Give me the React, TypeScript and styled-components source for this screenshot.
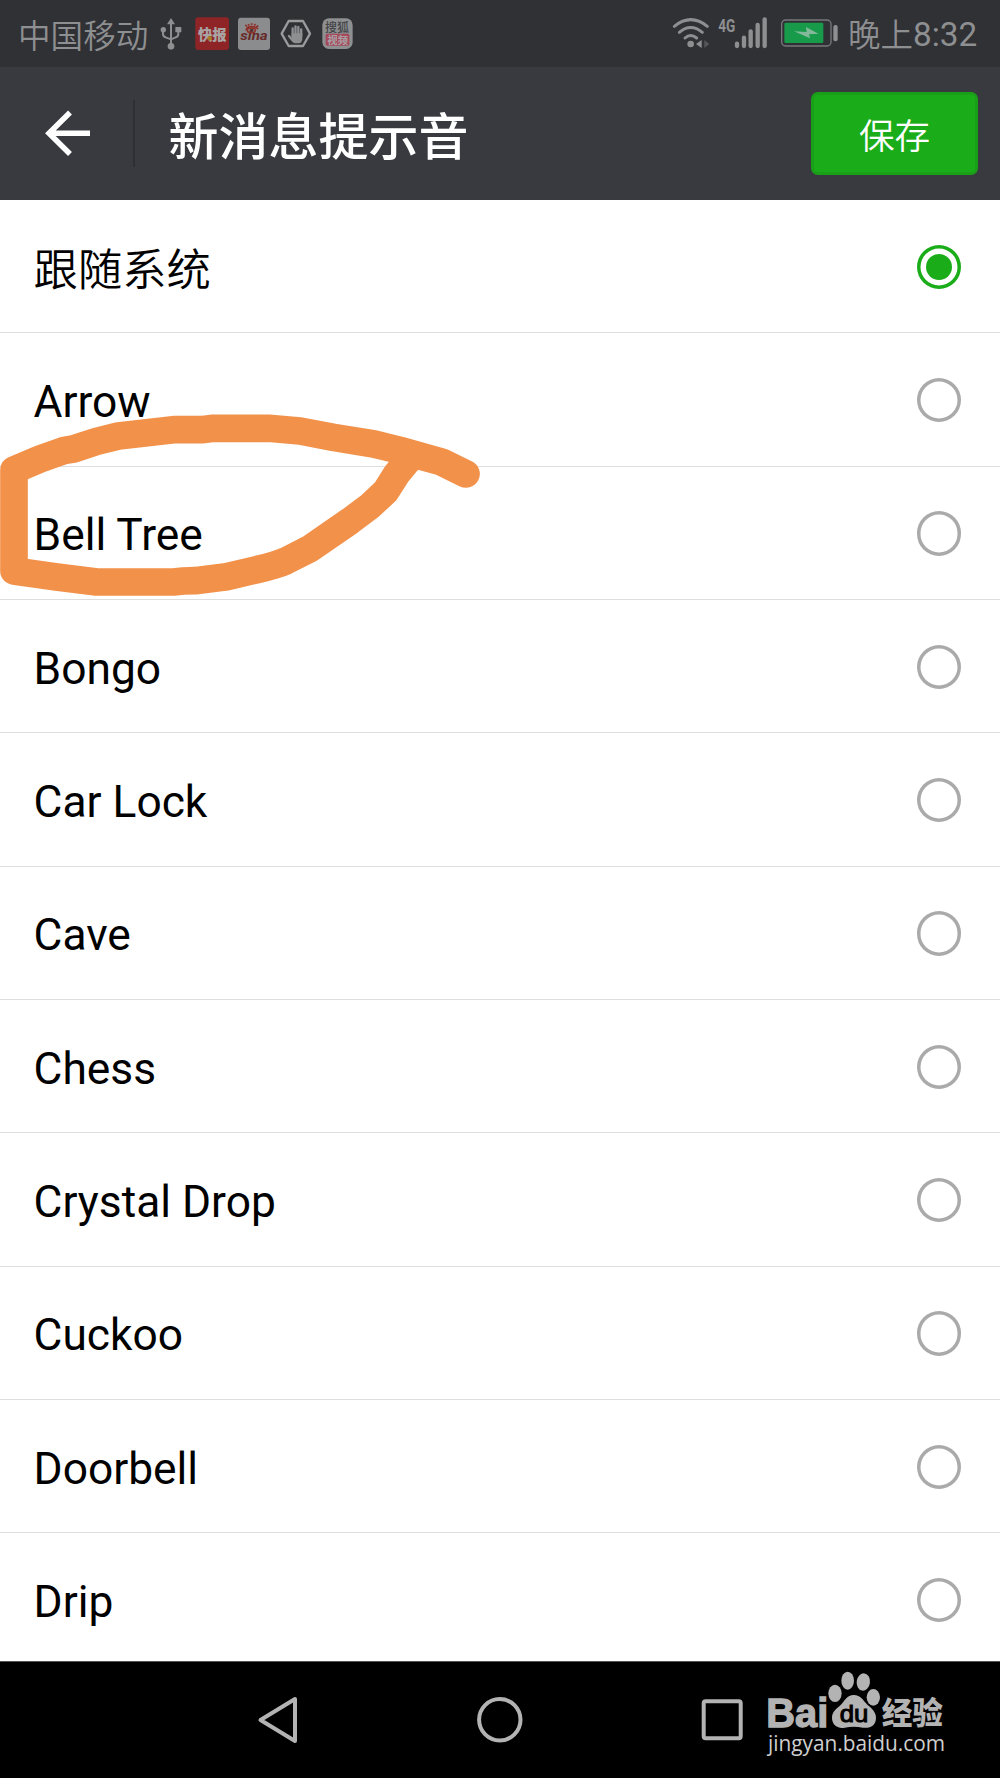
import React, { useState } from "react";
import styled, { createGlobalStyle } from "styled-components";

const GlobalStyle = createGlobalStyle`
  *, *::before, *::after { box-sizing: border-box; }
  body {
    margin: 0;
    background: #000;
    font-family: Roboto, "Noto Sans CJK SC", sans-serif;
  }
`;

const Screen = styled.div`
  position: relative;
  display: flex;
  flex-direction: column;
  width: 1000px;
  height: 1778px;
  overflow: hidden;
  background: #fff;
`;

const StatusBar = styled.header`
  display: flex;
  flex: none;
  align-items: center;
  justify-content: space-between;
  height: 66.67px;
  padding: 0 20px 0 18px;
  background: #303135;
  color: #8e8f91;
  font-size: 33.3px;
  line-height: 66px;
  white-space: nowrap;
`;

const StatusGroup = styled.div`
  display: flex;
  align-items: center;
  height: 100%;
`;

const Carrier = styled.span`
  width: 132px;
  padding-top: 1px;
  font-family: "Noto Sans CJK SC", sans-serif;
  font-size: 32.6px;
  font-weight: 350;
`;

const Clock = styled.time`
  display: flex;
  align-items: center;
  width: 130px;
`;

const DayPart = styled.span`
  margin-left: -2px;
  font-family: "Noto Sans CJK SC", sans-serif;
  font-size: 32.5px;
  font-weight: 350;
`;

const Time = styled.span`
  padding-top: 4px;
  font-size: 33.3px;
`;

const Glyphs = styled.svg`
  display: block;
  flex: none;
`;

const AppBar = styled.div`
  display: flex;
  flex: none;
  align-items: center;
  height: 133.33px;
  padding-right: 22px;
  background: #393a3f;
  color: #fff;
`;

const BackButton = styled.button`
  display: flex;
  align-items: center;
  width: 135px;
  height: 67px;
  padding: 0 0 0 45px;
  border: 0;
  border-right: 2px solid #2e2f33;
  background: none;
  color: inherit;
`;

const Title = styled.h1`
  flex: 1;
  margin: 0;
  padding: 10px 0 0 33.5px;
  font-size: 50px;
  font-weight: 500;
  line-height: 60px;
`;

const SaveButton = styled.button`
  width: 167px;
  height: 83.5px;
  padding: 0;
  border: 3px solid #1a9f19;
  border-radius: 7px;
  background: #1aad19;
  color: #fff;
  font-family: "Noto Sans CJK SC", sans-serif;
  font-size: 35.6px;
  font-weight: 350;
`;

const SoundList = styled.ul`
  flex: 1;
  min-height: 0;
  margin: 0;
  padding: 0;
  overflow: hidden;
  list-style: none;
`;

const SoundRow = styled.li`
  display: flex;
  align-items: center;
  justify-content: space-between;
  height: 133.333px;
  padding: 1.5px 39px 0 33.6px;
  border-bottom: 1.5px solid #dedede;
  color: #000;
  cursor: pointer;
`;

const SoundName = styled.span<{ $cjk: boolean }>`
  padding-top: ${(p) => (p.$cjk ? "0" : "3.5px")};
  font-family: ${(p) => (p.$cjk ? '"Noto Sans CJK SC"' : "Roboto")}, sans-serif;
  font-size: 44.3px;
  font-weight: ${(p) => (p.$cjk ? 350 : 400)};
  line-height: 60px;
`;

const Radio = styled.span<{ $checked: boolean }>`
  display: flex;
  align-items: center;
  justify-content: center;
  width: 44.5px;
  height: 44.5px;
  box-shadow: inset 0 0 0 3.5px ${(p) => (p.$checked ? "#1aad19" : "#aaa")};
  border-radius: 50%;

  &::after {
    content: "";
    width: 26.5px;
    height: 26.5px;
    border-radius: 50%;
    background: ${(p) => (p.$checked ? "#1aad19" : "transparent")};
  }
`;

const NavBar = styled.nav`
  display: flex;
  flex: none;
  height: 117px;
  padding: 0 166px;
  border-top: 1px solid #555;
  background: #000;
`;

const NavButton = styled.button`
  display: flex;
  flex: 1;
  align-items: center;
  justify-content: center;
  padding: 0;
  border: 0;
  background: none;
`;

const Scribble = styled.svg`
  position: absolute;
  left: 0;
  top: 360px;
  pointer-events: none;
`;

const Watermark = styled.svg`
  position: absolute;
  right: 0;
  bottom: 0;
  pointer-events: none;
`;

const sounds = [
  "跟随系统",
  "Arrow",
  "Bell Tree",
  "Bongo",
  "Car Lock",
  "Cave",
  "Chess",
  "Crystal Drop",
  "Cuckoo",
  "Doorbell",
  "Drip",
];

const CJK = '"Noto Sans CJK SC", sans-serif';

function NotificationIcons() {
  return (
    <Glyphs width="220" height="66" viewBox="450 0 660 198">
      <g fill="none" stroke="#8e8f91" strokeWidth="6">
        <path d="M513 138V66M489 94v8q0 8 8 10l16 6M535 92v10q0 8-8 10l-14 6" />
      </g>
      <g fill="#8e8f91">
        <path d="M513 54l12 19h-24z" />
        <circle cx="513" cy="139" r="10" />
        <circle cx="490" cy="89" r="8" />
        <rect x="526" y="81" width="18" height="16" rx="2" />
      </g>

      <rect x="586" y="52" width="101" height="98" rx="9" fill="#8f2427" />
      <text x="594" y="119" fontFamily={CJK} fontSize="46" fontWeight="900" fill="#a9a3a3" textLength="86" lengthAdjust="spacingAndGlyphs">快报</text>
      <circle cx="629" cy="115" r="7" fill="#a67a22" />

      <rect x="714" y="53" width="96" height="97" rx="9" fill="#8b8c8e" />
      <g fill="none" stroke="#8f3029" strokeWidth="5">
        <path d="M738 91q2-11 17-11 15 0 19 7M741 79l-5-4M747 77l-2-5M755 75v-5M763 77l3-5M769 80l6-3" />
        <ellipse cx="754" cy="91" rx="12" ry="7" />
      </g>
      <circle cx="755" cy="91" r="5" fill="#463131" />
      <text x="721" y="121" fontFamily="Roboto, sans-serif" fontSize="36" fontWeight="700" fontStyle="italic" fill="#652b2a" textLength="82" lengthAdjust="spacingAndGlyphs">sina</text>

      <path d="M866 63h43l21 38-21 37h-43l-21-37z" fill="none" stroke="#9a9b9d" strokeWidth="7" strokeLinejoin="round" />
      <g fill="none" stroke="#8e8f91" strokeWidth="7" strokeLinecap="round">
        <path d="M878 105V85M886.5 105V79M895 105V81M903.5 107V88M876 119l-9-11" />
      </g>
      <path d="M874.5 100h32.5v14q0 16-11 16h-10q-8 0-12-10z" fill="#8e8f91" />

      <rect x="967" y="55" width="91" height="92" rx="20" fill="#8e8f91" />
      <rect x="977" y="101" width="71" height="36" rx="5" fill="#a6485a" />
      <text x="975" y="96" fontFamily={CJK} fontSize="36" fontWeight="500" fill="#434447">搜狐</text>
      <text x="982" y="131" fontFamily={CJK} fontSize="31" fontWeight="700" fill="#aaa4a8">视频</text>
    </Glyphs>
  );
}

function SignalIcons() {
  return (
    <Glyphs width="180" height="66" viewBox="60 0 540 198">
      <g fill="none" stroke="#8e8f91" strokeWidth="9" strokeLinecap="round">
        <path d="M73 79Q122 39 172 79M88 97Q122 68 157 97M105 114Q122 99 140 114" />
      </g>
      <circle cx="122" cy="132" r="10" fill="#8e8f91" />
      <path d="M155 120v24l-17-12z" fill="#8e8f91" />
      <path d="M163 120v24l15-12z" fill="#56575b" />
      <text x="205" y="95" fontFamily="Roboto, sans-serif" fontSize="56" fontWeight="700" fill="#8e8f91" textLength="51" lengthAdjust="spacingAndGlyphs">4G</text>
      <g stroke="#8e8f91" strokeWidth="13" strokeLinecap="round">
        <path d="M261 131v7M282 113v25M302 94v44M323 75v63M344 58v80" />
      </g>
      <rect x="395" y="60" width="148" height="78" rx="12" fill="none" stroke="#77787b" strokeWidth="4" />
      <rect x="403" y="68" width="117" height="61" rx="4" fill="#189a4b" />
      <path d="M432 94l38 2-2-15 37 20-28 2 3 12z" fill="#83b99a" />
      <rect x="550" y="75" width="13" height="49" rx="6" fill="#8e8f91" />
    </Glyphs>
  );
}

export default function App() {
  const [selected, setSelected] = useState(0);

  return (
    <>
      <GlobalStyle />
      <Screen>
        <StatusBar>
          <StatusGroup>
            <Carrier>中国移动</Carrier>
            <NotificationIcons />
          </StatusGroup>
          <StatusGroup>
            <SignalIcons />
            <Clock>
              <DayPart>晚上</DayPart>
              <Time>8:32</Time>
            </Clock>
          </StatusGroup>
        </StatusBar>

        <AppBar>
          <BackButton aria-label="返回">
            <Glyphs width="46" height="46" viewBox="0 0 46 46" fill="none" stroke="#fff" strokeWidth="5.5">
              <path d="M25 2.5L4 23.3L25 44M4 23.3H45" />
            </Glyphs>
          </BackButton>
          <Title>新消息提示音</Title>
          <SaveButton>保存</SaveButton>
        </AppBar>

        <SoundList>
          {sounds.map((name, index) => (
            <SoundRow key={name} onClick={() => setSelected(index)}>
              <SoundName $cjk={index === 0}>{name}</SoundName>
              <Radio $checked={index === selected} />
            </SoundRow>
          ))}
        </SoundList>

        <NavBar>
          <NavButton aria-label="返回键">
            <Glyphs width="40" height="48" viewBox="0 0 40 48" fill="none" stroke="#b3b3b3" strokeWidth="4" strokeLinejoin="round">
              <path d="M38 3v42L3.5 24z" />
            </Glyphs>
          </NavButton>
          <NavButton aria-label="主页">
            <Glyphs width="46" height="48" viewBox="0 0 46 48" fill="none" stroke="#b3b3b3" strokeWidth="4">
              <circle cx="22.8" cy="23.8" r="20.7" />
            </Glyphs>
          </NavButton>
          <NavButton aria-label="最近任务">
            <Glyphs width="44" height="44" viewBox="0 0 44 44" fill="none" stroke="#b3b3b3" strokeWidth="4">
              <rect x="2.7" y="3.2" width="37" height="37" rx="2" />
            </Glyphs>
          </NavButton>
        </NavBar>

        <Scribble width="500" height="260" viewBox="0 0 1500 780">
          <path
            d="M1398 342L1325 306L1200 271L1122 252L1000 232L900 213L806 205H640L605 209H520L355 228L290 244L220 267L190 272L120 297L42 330V633L170 651L290 666H520L550 663L585 662L680 650L770 629Q830 615 857 603L930 566L1050 483L1110 438L1157 394L1190 342L1225 300"
            fill="none"
            stroke="#f2914a"
            strokeWidth="83"
            strokeLinecap="round"
            strokeLinejoin="round"
          />
        </Scribble>

        <Watermark width="260" height="138" viewBox="0 0 780 414" fill="#b3b3b3">
          <text x="79" y="261" fontFamily="'Liberation Sans', sans-serif" fontSize="122" fontWeight="700" stroke="#b3b3b3" strokeWidth="4" textLength="186" lengthAdjust="spacingAndGlyphs">Bai</text>
          <ellipse cx="285" cy="160" rx="20" ry="26" />
          <ellipse cx="323" cy="122" rx="19" ry="27" />
          <ellipse cx="370" cy="126" rx="20" ry="26" transform="rotate(8 370 126)" />
          <ellipse cx="400" cy="172" rx="20" ry="25" />
          <path d="M341 165c22 0 28 17 41 29 12 10 26 21 26 39 0 24-18 33-39 30-20-4-36-4-55 0-22 4-39-9-38-31 1-18 13-25 26-37 12-12 19-30 39-30z" />
          <text x="299" y="246" fontFamily="'Liberation Sans', sans-serif" fontSize="73" fontWeight="400" fill="#000" stroke="#000" strokeWidth="3" textLength="86" lengthAdjust="spacingAndGlyphs">du</text>
          <text x="425" y="252" fontFamily={CJK} fontSize="92" fontWeight="900" textLength="184" lengthAdjust="spacingAndGlyphs">经验</text>
          <text x="84" y="332" fontFamily="'Open Sans', sans-serif" fontSize="64" fill="#cfcfcf" textLength="531" lengthAdjust="spacingAndGlyphs">jingyan.baidu.com</text>
        </Watermark>
      </Screen>
    </>
  );
}
